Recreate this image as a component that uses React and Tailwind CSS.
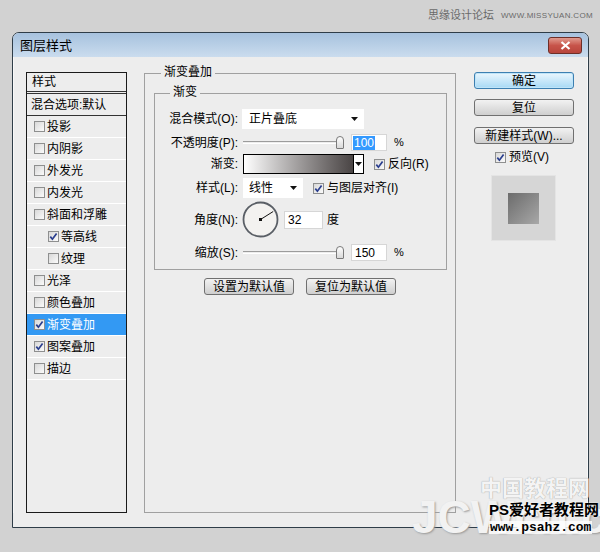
import React from 'react';

const Check = ({ checked }) => (
  <span className="w-[11px] h-[11px] border border-[#8e8f8f] bg-gradient-to-br from-[#d8d8d8] to-[#fbfbfb] flex items-center justify-center shrink-0">
    {checked && (
      <svg width="9" height="9" viewBox="0 0 9 9">
        <path d="M1.3 4.6 L3.4 7.2 L7.6 1.4" stroke="#2b3f8f" strokeWidth="1.7" fill="none" />
      </svg>
    )}
  </span>
);

const Arrow = () => (
  <svg width="7" height="4" viewBox="0 0 7 4"><path d="M0 0 H7 L3.5 4 Z" fill="#111" /></svg>
);

const Slider = () => (
  <div className="relative w-[101px] h-[17px] ml-[4px]">
    <div className="absolute left-0 right-[4px] top-[7px] h-[3px] border-t border-[#9c9c9c] border-b border-b-white" />
    <div className="absolute right-0 top-[2px] w-[8px] h-[13px] rounded-t-[4px] rounded-b-[1px] border border-[#7a7a7a] bg-gradient-to-b from-white to-[#d9d9d9]" />
  </div>
);

const Btn = ({ children, primary, className = '' }) => (
  <div
    className={`h-[17px] flex items-center justify-center rounded-[3px] border text-[12px] leading-none text-black whitespace-nowrap ${
      primary
        ? 'border-[#3c7fb1] bg-gradient-to-b from-[#eaf6fd] to-[#a7d9f5] shadow-[0_0_0_1px_#bfe4f8_inset]'
        : 'border-[#707070] bg-gradient-to-b from-[#f2f2f2] to-[#cfcfcf]'
    } ${className}`}
  >
    {children}
  </div>
);

const styles = [
  { name: '投影', on: false },
  { name: '内阴影', on: false },
  { name: '外发光', on: false },
  { name: '内发光', on: false },
  { name: '斜面和浮雕', on: false },
  { name: '等高线', on: true, sub: true },
  { name: '纹理', on: false, sub: true },
  { name: '光泽', on: false },
  { name: '颜色叠加', on: false },
  { name: '渐变叠加', on: true, active: true },
  { name: '图案叠加', on: true },
  { name: '描边', on: false },
];

const Label = ({ children }) => (
  <div className="w-[84px] text-right pr-[1px] text-[12px] leading-none whitespace-nowrap">{children}</div>
);

export default function App() {
  return (
    <div className="relative w-[600px] h-[552px] overflow-hidden bg-[#d2d2d2] pt-[32px] pl-[12px] font-['Liberation_Sans','Noto_Sans_CJK_SC',sans-serif] text-black">
      {/* top watermark */}
      <div className="absolute top-[10px] left-[428px] flex items-center gap-[7px] text-[#6a6a6a] whitespace-nowrap">
        <span className="text-[11px] leading-none">思缘设计论坛</span>
        <span className="text-[8px] leading-none tracking-[0.3px]">WWW.MISSYUAN.COM</span>
      </div>

      {/* dialog */}
      <div className="w-[577px] h-[496px] rounded-t-[7px] border border-[#2f3d48] bg-[#ededed] flex flex-col overflow-hidden">
        <div className="h-[24px] shrink-0 bg-gradient-to-b from-[#a7c2de] to-[#cadcee] flex items-center justify-between pl-[7px] pr-[6px]">
          <span className="text-[13px] leading-none">图层样式</span>
          <div className="w-[34px] h-[17px] rounded-[3px] border border-[#6e2f28] bg-gradient-to-b from-[#e09a8f] via-[#c7544a] to-[#b8453c] flex items-center justify-center">
            <svg width="11" height="9" viewBox="0 0 11 9">
              <path d="M1.5 1 L9.5 8 M9.5 1 L1.5 8" stroke="#fff" strokeWidth="2.2" />
            </svg>
          </div>
        </div>

        <div className="flex pl-[12px] pt-[15px] border-l border-r border-white/60">
          {/* left list */}
          <div className="w-[101px] h-[441px] border border-[#1a1a1a] flex flex-col text-[12px] leading-none">
            <div className="h-[21px] flex items-center pl-[5px] border-b-[3px] border-double border-[#333]">样式</div>
            <div className="h-[22px] flex items-center pl-[4px] border-b border-[#333] whitespace-nowrap">混合选项:默认</div>
            {styles.map((s) => (
              <div
                key={s.name}
                className={`h-[22px] flex items-center gap-[2px] border-b border-white ${s.sub ? 'pl-[21px]' : 'pl-[7px]'} ${
                  s.active ? 'bg-[#3399f3] text-white' : ''
                }`}
              >
                <Check checked={s.on} />
                <span>{s.name}</span>
              </div>
            ))}
          </div>

          {/* main group */}
          <div className="relative ml-[17px] mt-[1px] w-[312px] h-[440px] border border-[#a0a0a0] pl-[9px] pt-[19px]">
            <span className="absolute -top-[8px] left-[16px] bg-[#ededed] px-[3px] text-[12px] leading-none">渐变叠加</span>

            <div className="relative w-[293px] h-[177px] border border-[#a0a0a0] flex flex-col pt-[15px]">
              <span className="absolute -top-[8px] left-[15px] bg-[#ededed] px-[3px] text-[12px] leading-none">渐变</span>

              <div className="flex items-center h-[20px]">
                <Label>混合模式(O):</Label>
                <div className="ml-[3px] w-[122px] h-[20px] bg-white flex items-center justify-between pl-[7px] pr-[6px] text-[12px]">
                  <span>正片叠底</span>
                  <Arrow />
                </div>
              </div>

              <div className="flex items-center h-[17px] mt-[5px]">
                <Label>不透明度(P):</Label>
                <Slider />
                <div className="ml-[7px] w-[36px] h-[17px] bg-white border border-[#d6d6d6] flex items-center pl-[1px]">
                  <span className="bg-[#3399ff] text-white text-[12px] leading-[14px] px-[1px]">100</span>
                </div>
                <span className="ml-[7px] text-[11px]">%</span>
              </div>

              <div className="flex items-center h-[20px] mt-[3px]">
                <Label>渐变:</Label>
                <div className="ml-[4px] w-[121px] h-[20px] border border-black flex">
                  <div className="flex-1 bg-gradient-to-r from-white to-[#4a4545]" />
                  <div className="w-[10px] bg-white border-l border-black flex items-center justify-center">
                    <Arrow />
                  </div>
                </div>
                <div className="ml-[10px] flex items-center gap-[3px] text-[12px]">
                  <Check checked />
                  <span>反向(R)</span>
                </div>
              </div>

              <div className="flex items-center h-[20px] mt-[4px]">
                <Label>样式(L):</Label>
                <div className="ml-[4px] w-[60px] h-[20px] bg-white flex items-center justify-between pl-[6px] pr-[6px] text-[12px]">
                  <span>线性</span>
                  <Arrow />
                </div>
                <div className="ml-[10px] flex items-center gap-[3px] text-[12px]">
                  <Check checked />
                  <span>与图层对齐(I)</span>
                </div>
              </div>

              <div className="flex items-center h-[37px] mt-[3px]">
                <Label>角度(N):</Label>
                <svg className="ml-[3px]" width="37" height="37" viewBox="0 0 37 37">
                  <circle cx="18.5" cy="18.5" r="17" fill="#f3f2f0" stroke="#5a5f66" strokeWidth="1.8" />
                  <line x1="18.5" y1="18.5" x2="31.2" y2="10.5" stroke="#111" strokeWidth="1" />
                  <rect x="17" y="17" width="3" height="3" fill="#111" />
                </svg>
                <div className="ml-[5px] w-[39px] h-[18px] bg-white border border-[#d6d6d6] flex items-center pl-[3px] text-[12px]">32</div>
                <span className="ml-[4px] text-[12px]">度</span>
              </div>

              <div className="flex items-center h-[17px] mt-[6px]">
                <Label>缩放(S):</Label>
                <Slider />
                <div className="ml-[7px] w-[36px] h-[17px] bg-white border border-[#d6d6d6] flex items-center pl-[3px] text-[12px]">150</div>
                <span className="ml-[7px] text-[11px]">%</span>
              </div>
            </div>

            <div className="flex gap-[12px] mt-[8px] ml-[50px]">
              <Btn className="w-[90px]">设置为默认值</Btn>
              <Btn className="w-[90px]">复位为默认值</Btn>
            </div>
          </div>

          {/* right column */}
          <div className="ml-[18px] w-[100px] flex flex-col">
            <Btn primary>确定</Btn>
            <Btn className="mt-[10px]">复位</Btn>
            <Btn className="mt-[11px]">新建样式(W)...</Btn>
            <div className="mt-[7px] ml-[21px] flex items-center gap-[3px] text-[12px] leading-none h-[12px]">
              <Check checked />
              <span>预览(V)</span>
            </div>
            <div className="mt-[12px] ml-[17px] w-[65px] h-[66px] bg-[#d6d6d6] border border-[#e4e4e4] flex items-center justify-center">
              <div className="w-[31px] h-[31px] bg-gradient-to-br from-[#6c6c6c] to-[#a8a8a8]" />
            </div>
          </div>
        </div>
      </div>

      {/* bottom watermarks */}
      <div className="absolute left-[412px] top-[494px] whitespace-nowrap text-[46px] leading-none font-bold text-[#f2f2f2] [text-shadow:1px_1px_2px_#999]">JCWcn.com</div>
      <div className="absolute left-[480px] top-[478px] whitespace-nowrap text-[22px] leading-none font-bold text-[#f4f4f4] [text-shadow:0_0_1px_#888]">中国教程网</div>
      <div className="absolute left-[489px] top-[502px] flex flex-col items-start leading-none font-bold whitespace-nowrap">
        <span className="text-[15px] text-black [text-shadow:0_0_2px_#fff]">PS爱好者教程网</span>
        <span className="mt-[4px] text-[13px] text-black bg-white/80 px-[1px] font-['Liberation_Mono',monospace]">www.psahz.com</span>
      </div>
    </div>
  );
}
